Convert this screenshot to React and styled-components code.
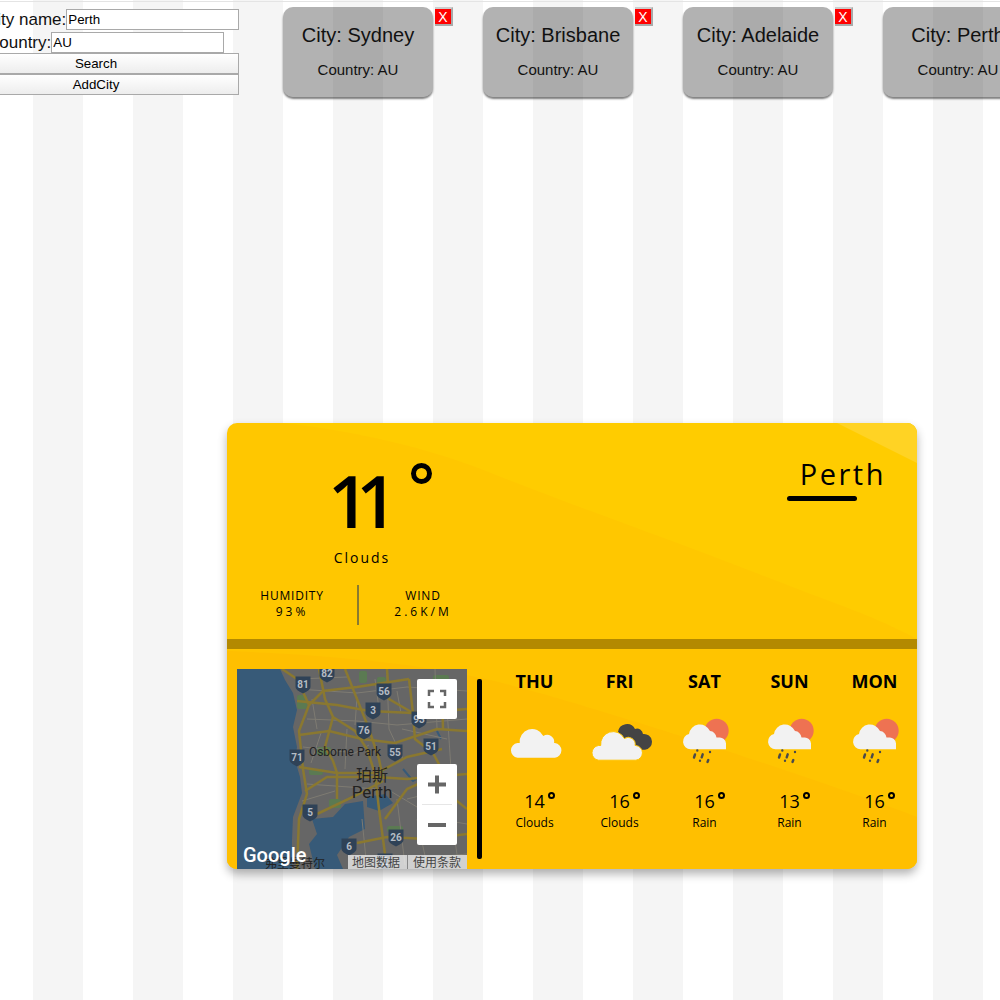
import styled, { createGlobalStyle } from 'styled-components'

const cities = ['Sydney', 'Brisbane', 'Adelaide', 'Perth']
const forecast = [
  { day: 'THU', temp: 14, text: 'Clouds', icon: 'cloud' },
  { day: 'FRI', temp: 16, text: 'Clouds', icon: 'dark' },
  { day: 'SAT', temp: 16, text: 'Rain', icon: 'rain' },
  { day: 'SUN', temp: 13, text: 'Rain', icon: 'rain' },
  { day: 'MON', temp: 16, text: 'Rain', icon: 'rain' },
]
const shields = [
  [66, 15, '81'], [90, 4, '82'], [147, 22, '56'], [136, 41, '3'], [127, 61, '76'], [182, 50, '93'],
  [60, 88, '71'], [158, 83, '55'], [194, 77, '51'], [73, 143, '5'], [159, 168, '26'], [112, 177, '6'], [148, 192, '2'],
]
const roads = [
  'M45 0 L60 10 L72 36 L62 62 L66 100 L70 125 L62 150 L60 200',
  'M82 0 L88 30 L96 48 L118 62 L130 80 L138 105 L142 140 L150 200',
  'M108 0 L116 20 L132 60 L142 90 L146 110',
  'M60 32 L100 36 L132 42 L176 44 L230 40',
  'M62 66 L92 62 L125 70 L158 74 L200 60 L230 62',
  'M62 98 L100 104 L140 104 L170 88 L205 80',
  'M68 122 L90 108 L140 108 L170 110 L230 105',
  'M80 145 L120 126 L146 112',
  'M148 150 L170 120 L196 108 L215 128 L230 140',
  'M172 10 L176 44 L178 70 L196 84 L210 110',
  'M120 174 L150 168 L190 170 L230 165',
  'M190 170 L184 130 L200 108',
  'M150 0 L152 30 L176 44',
  'M72 36 L86 22 L120 18 L172 10',
  'M96 48 L88 78 L96 92 L100 104',
  'M100 104 L100 130',
  'M205 20 L206 60',
]
const streets = [
  'M60 20 L120 24 L170 18 L230 22', 'M70 50 L120 52 L160 56 L230 50', 'M66 78 L118 84 L132 76',
  'M150 6 L152 60 L166 90', 'M198 0 L200 60', 'M110 60 L108 100', 'M150 120 L200 150 L230 155',
  'M160 130 L168 196', 'M70 115 L140 120', 'M210 40 L214 100 L205 150', 'M125 150 L130 200', 'M175 190 L230 185',
  'M75 30 L80 60', 'M84 64 L74 94', 'M120 28 L118 56', 'M138 10 L142 40', 'M165 60 L210 70', 'M170 130 L220 118',
  'M180 150 L190 196', 'M65 132 L98 122', 'M160 22 L164 44', 'M215 150 L222 200', 'M62 10 L110 8',
]
const parks = [
  [60, 26, 10, 14], [122, 2, 8, 12], [140, 8, 9, 9], [80, 78, 14, 8], [72, 100, 14, 6],
  [92, 130, 12, 9], [150, 157, 16, 6], [198, 130, 18, 12], [196, 6, 16, 10],
]

const GlobalStyle = createGlobalStyle`
  html, body {
    margin: 0;
    padding: 0;
  }
  body {
    width: 1000px;
    height: 1000px;
    overflow: hidden;
    background: linear-gradient(90deg, #fff 33px, #f5f5f5 33px, #f5f5f5 83px, #fff 83px) 0 0 / 100px 100%;
    font-family: "Liberation Sans", Arial, sans-serif;
    color: #111;
  }
`
const Page = styled('div')`
  height: 1000px;
  padding-top: 1px;
  box-sizing: border-box;
`
const TopRule = styled('div')`
  height: 1px;
  background: #e4e4e4;
`
const TopBar = styled('div')`
  display: flex;
  height: 421px;
`
const SearchForm = styled('form')`
  flex: none;
  width: 286px;
  margin: 7px 44px 0 -47px;
`
const FieldRow = styled('div')`
  display: flex;
  align-items: center;
  height: 21px;
  margin-bottom: ${(props) => props.$gap}px;
  padding-left: ${(props) => props.$indent}px;
  font-size: 17px;
  white-space: nowrap;
`
const SearchInput = styled('input')`
  flex: none;
  box-sizing: border-box;
  width: 173px;
  height: 21px;
  padding: 1px;
  border: 1px solid #a9a9a9;
  font: 13.33px "Liberation Sans", Arial, sans-serif;
  color: #000;
  background: #fff;
`
const FormButton = styled('button')`
  display: block;
  box-sizing: border-box;
  width: 100%;
  height: 21px;
  padding: 0;
  border: 1px solid #a9a9a9;
  background: linear-gradient(#fff, #ededed);
  font: 13.33px "Liberation Sans", Arial, sans-serif;
  color: #000;
`
const CityRow = styled('div')`
  display: flex;
  gap: 50px;
  padding-top: 5px;
`
const CityCard = styled('div')`
  position: relative;
  flex: none;
  box-sizing: border-box;
  width: 150px;
  height: 90px;
  padding-top: 16px;
  border-radius: 10px;
  background: rgba(0, 0, 0, 0.3);
  box-shadow: 0 2px 2px rgba(0, 0, 0, 0.5);
  text-align: center;
`
const CityName = styled('div')`
  font-size: 20px;
  line-height: 24px;
`
const CityCountry = styled('div')`
  margin-top: 15px;
  font-size: 15px;
  line-height: 16px;
`
const RemoveButton = styled('button')`
  position: absolute;
  top: 0;
  left: 152px;
  box-sizing: border-box;
  width: 18px;
  height: 19px;
  padding: 0;
  border-style: solid;
  border-width: 2px 2px 2px 0;
  border-color: #ccc #a9a9a9 #a9a9a9 #ccc;
  background: #f00;
  color: #fff;
  font: 14px "Liberation Sans", Arial, sans-serif;
`
const WeatherCard = styled('section')`
  position: relative;
  width: 690px;
  height: 446px;
  margin-left: 227px;
  border-radius: 10px;
  background: #ffc700;
  box-shadow: 0 5px 10px rgba(0, 0, 0, 0.3);
  overflow: hidden;
  font-family: "Open Sans", "Noto Sans", sans-serif;
  color: #000;
`
const Backdrop = styled('svg')`
  position: absolute;
  inset: 0;
`
const TopPanel = styled('div')`
  position: relative;
  display: flex;
  justify-content: space-between;
  height: 216px;
`
const NowColumn = styled('div')`
  width: 260px;
  text-align: center;
`
const NowTemp = styled('div')`
  position: relative;
  width: 56px;
  height: 80px;
  margin: 37px 0 0 106px;
  font-size: 72px;
  font-weight: 600;
  line-height: 80px;
  letter-spacing: -13px;
  text-align: left;
  text-indent: -5px;
`
const Degree = styled('span')`
  position: absolute;
  top: ${(props) => props.$top}px;
  left: 100%;
  margin-left: ${(props) => props.$gap}px;
  box-sizing: border-box;
  width: ${(props) => props.$size}px;
  height: ${(props) => props.$size}px;
  border: ${(props) => props.$line}px solid #000;
  border-radius: 50%;
`
const NowText = styled('div')`
  margin-top: 8px;
  padding-left: 10px;
  font-size: 14px;
  line-height: 20px;
  letter-spacing: 2px;
`
const Stats = styled('div')`
  display: grid;
  grid-template-columns: 1fr 1fr;
  margin-top: 17px;
`
const Stat = styled('div')`
  height: 40px;
  font-size: 12px;
  line-height: 16px;
  padding-top: 3px;
  box-sizing: border-box;
  letter-spacing: 0.8px;
  & + & {
    border-left: 2px solid #8a7a30;
  }
`
const StatValue = styled('div')`
  letter-spacing: 3px;
`
const CityColumn = styled('div')`
  padding: 31px 31px 0 0;
  width: 130px;
  box-sizing: border-box;
`
const CityTitle = styled('div')`
  font-size: 29px;
  font-weight: 500;
  line-height: 39px;
  letter-spacing: 2.5px;
  text-align: right;
`
const Underline = styled('div')`
  width: 70px;
  height: 5px;
  margin-top: 3px;
  border-radius: 3px;
  background: #000;
`
const Band = styled('div')`
  position: relative;
  height: 10px;
  background: #b38900;
`
const BottomPanel = styled('div')`
  position: relative;
  display: flex;
  height: 220px;
  padding: 20px 0 0 10px;
  box-sizing: border-box;
`
const MapBox = styled('div')`
  position: relative;
  flex: none;
  width: 230px;
  height: 200px;
  overflow: hidden;
  background: #666;
`
const MapSvg = styled('svg')`
  display: block;
`
const MapControl = styled('div')`
  position: absolute;
  left: 180px;
  top: ${(props) => props.$top}px;
  width: 40px;
  height: ${(props) => props.$height}px;
  background: #fff;
  border-radius: 2px;
`
const GoogleMark = styled('div')`
  position: absolute;
  left: 6px;
  bottom: 2px;
  color: #fff;
  font: 500 20px/24px "Roboto", sans-serif;
`
const Attribution = styled('div')`
  position: absolute;
  right: 0;
  bottom: 0;
  display: flex;
  height: 14px;
  background: rgba(255, 255, 255, 0.7);
  font: 12px/13px "Noto Sans CJK SC", sans-serif;
  color: #444;
`
const AttributionItem = styled('span')`
  padding: 0 7px 0 4px;
  & + & {
    padding: 0 6px 0 5px;
    border-left: 1px solid #888;
  }
`
const Divider = styled('div')`
  flex: none;
  width: 5px;
  height: 180px;
  margin: 10px 10px 0;
  border-radius: 2px;
  background: #000;
`
const DayList = styled('div')`
  display: grid;
  grid-template-columns: repeat(5, 85px);
`
const DayColumn = styled('div')`
  display: flex;
  flex-direction: column;
  align-items: center;
`
const DayName = styled('div')`
  height: 24px;
  font-size: 18px;
  font-weight: 700;
  line-height: 24px;
`
const DayIcon = styled('svg')`
  margin-top: 17px;
`
const DayTemp = styled('div')`
  position: relative;
  margin-top: 15px;
  font-size: 18px;
  line-height: 24px;
`
const DayText = styled('div')`
  margin-top: 2px;
  font-size: 12px;
  line-height: 16px;
`

const CloudShape = ({ x = 0, y = 0, fill = '#f2f2f2', stroke = 'none' }) => (
  <g transform={`translate(${x} ${y})`} fill={fill} stroke={stroke}>
    <path d="M14.5 47.7a7.4 7.4 0 0 1 0-14.7h2.2a12.5 12.5 0 0 1 23.6-7a7 7 0 0 1 10.8 7h.8a7.4 7.4 0 0 1 0 14.7z" />
  </g>
)

const WeatherIcon = ({ type }) => {
  return (
    <DayIcon width="64" height="64" viewBox="0 0 64 64">
      {type === 'cloud' && <CloudShape />}
      {type === 'dark' && (
        <>
          <path fill="#444" d="M30 22a9 9 0 0 1 17-3a6 6 0 0 1 8 5a6.5 6.5 0 0 1 2 15.800h-20z" />
          <CloudShape x={-4} y={2.5} stroke="#ffc400" />
        </>
      )}
      {type === 'rain' && (
        <>
          <circle cx="43.7" cy="20.7" r="12" fill="#ee7252" />
          <path
            fill="#f2f2f2"
            d="M17.5 39.300a7.700 7.700 0 0 1-1.500-15.200a11 11 0 0 1 21-3a7 7 0 0 1 6.500 6.500h2.500a6.200 6.200 0 0 1 7 6v5.700z"
          />
          <path
            fill="none"
            stroke="#4a4a4a"
            strokeWidth="2.4"
            strokeLinecap="round"
            d="M24.300 40.500v.1M22 44.500l-1 3M29.700 44.300l-1 3M27 50.700v.1M37 42v.1M35.300 50l-.8 2"
          />
        </>
      )}
    </DayIcon>
  )
}

const PerthMap = () => (
  <MapSvg width="230" height="200" viewBox="0 0 230 200">
    <path
      fill="#375a78"
      d="M0 0H43L48 11L56 24L60 41L56 58L60 78L58 91L63 108L65 124L56 148L55 171L55 200H0Z"
    />
    <g fill="#5b7a52">
      {parks.map(([x, y, w, h]) => (
        <rect key={`${x}-${y}`} x={x} y={y} width={w} height={h} rx="2" />
      ))}
    </g>
    <path
      fill="#375a78"
      d="M75 150L96 148L108 135L126 132L128 160L112 168L100 186L106 200H78L72 175L80 165Z"
    />
    <path fill="#375a78" d="M130 128L148 125L156 134L142 142L130 138Z" />
    <path fill="none" stroke="#375a78" strokeWidth="2" d="M166 100L176 112L186 106M200 62L204 70" />
    <g fill="none" stroke="#7e7b72" strokeWidth="1">
      {streets.map((d) => (
        <path key={d} d={d} />
      ))}
    </g>
    <g fill="none" stroke="#8a7830" strokeWidth="2.5">
      {roads.map((d) => (
        <path key={d} d={d} />
      ))}
    </g>
    {shields.map(([x, y, label]) => (
      <g key={label} transform={`translate(${x} ${y})`}>
        <path fill="#2f4257" d="M-7.5 -7.500H7.500V3Q7.500 6 0 9.500Q-7.500 6 -7.500 3Z" />
        <text y="3.500" fill="#b5bcc4" fontSize="10" fontWeight="700" fontFamily="Roboto, sans-serif" textAnchor="middle">
          {label}
        </text>
      </g>
    ))}
    <g fontFamily="Roboto, 'Noto Sans CJK SC', sans-serif" fill="#222" textAnchor="middle">
      <text x="108" y="87" fontSize="12">Osborne Park</text>
      <text x="135" y="112" fontSize="16" fontFamily="'Noto Sans CJK SC', sans-serif">珀斯</text>
      <text x="135" y="129" fontSize="17">Perth</text>
      <text x="58" y="199" fontSize="12" fontFamily="'Noto Sans CJK SC', sans-serif">弗里曼特尔</text>
    </g>
  </MapSvg>
)

const App = () => {
  return (
    <>
      <GlobalStyle />
      <Page>
        <TopRule />
        <TopBar>
          <SearchForm>
            <FieldRow $indent={32} $gap={2}>
              City name:<SearchInput defaultValue="Perth" />
            </FieldRow>
            <FieldRow $indent={34} $gap={0}>
              Country:<SearchInput defaultValue="AU" />
            </FieldRow>
            <FormButton type="button">Search</FormButton>
            <FormButton type="button">AddCity</FormButton>
          </SearchForm>
          <CityRow>
            {cities.map((city) => (
              <CityCard key={city}>
                <CityName>City: {city}</CityName>
                <CityCountry>Country: AU</CityCountry>
                {city !== 'Perth' && <RemoveButton type="button">X</RemoveButton>}
              </CityCard>
            ))}
          </CityRow>
        </TopBar>
        <WeatherCard>
          <Backdrop width="690" height="446" viewBox="0 0 690 446">
            <path fill="#ffcc00" d="M57 0C110 6 190 20 264 50S440 115 529 150S640 190 690 216V0Z" />
            <path fill="#ffd324" d="M610 0H690V40Z" />
            <path fill="#ffc400" d="M0 226H690V446H0Z" />
            <path fill="#ffbf00" d="M0 228C100 232 190 240 263 257S560 345 690 394V446H0Z" />
          </Backdrop>
          <TopPanel>
            <NowColumn>
              <NowTemp>
                11
                <Degree $top={3} $gap={22} $size={21} $line={5} />
              </NowTemp>
              <NowText>Clouds</NowText>
              <Stats>
                <Stat>
                  HUMIDITY
                  <StatValue>93%</StatValue>
                </Stat>
                <Stat>
                  WIND
                  <StatValue>2.6K/M</StatValue>
                </Stat>
              </Stats>
            </NowColumn>
            <CityColumn>
              <CityTitle>Perth</CityTitle>
              <Underline />
            </CityColumn>
          </TopPanel>
          <Band />
          <BottomPanel>
            <MapBox>
              <PerthMap />
              <MapControl $top={10} $height={40}>
                <svg width="40" height="40" viewBox="0 0 40 40">
                  <path fill="none" stroke="#666" strokeWidth="2.5" d="M12 17V12H17M23 12H28V17M28 23V28H23M17 28H12V23" />
                </svg>
              </MapControl>
              <MapControl $top={95} $height={81}>
                <svg width="40" height="81" viewBox="0 0 40 81">
                  <path fill="#666" d="M11 18.500H18V11.500H22V18.500H29V22.500H22V29.500H18V22.500H11ZM11 59H29V63H11Z" />
                  <path stroke="#e6e6e6" d="M5 40.500H35" />
                </svg>
              </MapControl>
              <GoogleMark>Google</GoogleMark>
              <Attribution>
                <AttributionItem>地图数据</AttributionItem>
                <AttributionItem>使用条款</AttributionItem>
              </Attribution>
            </MapBox>
            <Divider />
            <DayList>
              {forecast.map((item) => (
                <DayColumn key={item.day}>
                  <DayName>{item.day}</DayName>
                  <WeatherIcon type={item.icon} />
                  <DayTemp>
                    {item.temp}
                    <Degree $top={3} $gap={3} $size={7} $line={2} />
                  </DayTemp>
                  <DayText>{item.text}</DayText>
                </DayColumn>
              ))}
            </DayList>
          </BottomPanel>
        </WeatherCard>
      </Page>
    </>
  )
}

export default App
